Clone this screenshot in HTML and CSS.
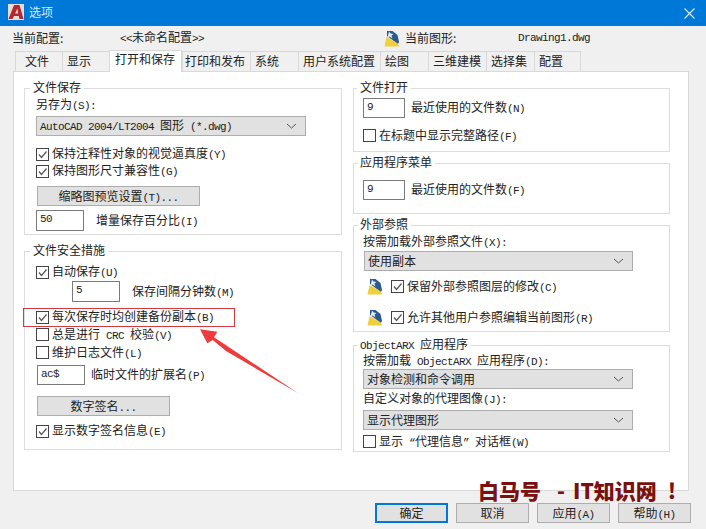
FILE: index.html
```html
<!DOCTYPE html>
<html lang="zh-CN">
<head>
    <meta charset="UTF-8">
    <title>选项</title>
    <link rel="stylesheet" href="styles.css">
</head>
<body>
    <div class="dialog">
        <!-- Title bar -->
        <div class="titlebar">
            <svg class="app-logo" width="16" height="16" viewBox="0 0 16 16">
                <rect width="16" height="16" fill="#e9dcd8"/>
                <polygon points="0.5,15 6,1 11.5,1 15.5,15 11.5,15 10.8,12 6,12 4.5,15" fill="#b3282d"/>
                <polygon points="7.2,9.4 10.2,9.4 9.3,4.5" fill="#e9dcd8"/>
            </svg>
            <span class="title-text">选项</span>
            <svg class="close" width="11" height="11" viewBox="0 0 11 11">
                <path d="M0.5 0.5L10.5 10.5M10.5 0.5L0.5 10.5" stroke="#dcecf9" stroke-width="1.1" fill="none"/>
            </svg>
        </div>

        <!-- Profile and drawing -->
        <div class="profile">
            <span class="profile-label">当前配置:</span>
            <span class="profile-name"><span class="en">&lt;&lt;</span>未命名配置<span class="en">&gt;&gt;</span></span>
            <svg class="dwg-icon dwg-top" width="16" height="17" viewBox="0 0 16 17">
                <polygon points="3,6 14,14 15,12 13.5,5 8.5,1 3,1" fill="#2a5a8c"/>
                <polygon points="2.5,7 13,13 15.5,16.5 0.5,16.5" fill="#f0cf3a"/>
                <polygon points="5,1.5 6.5,3.5 9.5,4 7.5,5.5 8.5,8.5 5.5,6.5 3.5,7.5" fill="#e4ecf4"/>
            </svg>
            <span class="drawing-label">当前图形:</span>
            <span class="en drawing-name">Drawing1.dwg</span>
        </div>

        <!-- Tabs -->
        <div class="tabs">
            <div class="tab tab-file">文件</div>
            <div class="tab tab-w47">显示</div>
            <div class="tab active">打开和保存</div>
            <div class="tab tab-print">打印和发布</div>
            <div class="tab tab-w48">系统</div>
            <div class="tab tab-user">用户系统配置</div>
            <div class="tab tab-w48">绘图</div>
            <div class="tab tab-3d">三维建模</div>
            <div class="tab tab-w48">选择集</div>
            <div class="tab tab-w47">配置</div>
        </div>

        <div class="panel">
            <div class="col">
                <fieldset class="group group-left">
                    <legend>文件保存</legend>
                    <div class="row mt1">另存为<span class="en">(S):</span></div>
                    <div class="combo combo-wide mt3">
                        <span><span class="en">AutoCAD 2004/LT2004 </span>图形<span class="en"> (*.dwg)</span></span>
                        <svg class="chev" width="11" height="6" viewBox="0 0 11 6"><path d="M1 1L5.5 5L10 1" stroke="#555" fill="none"/></svg>
                    </div>
                    <div class="row mt10"><span class="cb on"><svg width="11" height="11" viewBox="0 0 11 11"><path d="M2 5.5L4.5 8.5L9.5 2.5" stroke="#555" stroke-width="1.2" fill="none"/></svg></span>保持注释性对象的视觉逼真度<span class="en">(Y)</span></div>
                    <div class="row mt1"><span class="cb on"><svg width="11" height="11" viewBox="0 0 11 11"><path d="M2 5.5L4.5 8.5L9.5 2.5" stroke="#555" stroke-width="1.2" fill="none"/></svg></span>保持图形尺寸兼容性<span class="en">(G)</span></div>
                    <div class="btn btn-thumb mt7">缩略图预览设置<span class="en">(T)...</span></div>
                    <div class="row-input mt4">
                        <span class="field field-48 en">50</span>
                        <span class="after-12">增量保存百分比<span class="en">(I)</span></span>
                    </div>
                </fieldset>

                <fieldset class="group group-left group-safety">
                    <legend>文件安全措施</legend>
                    <div class="row mt5"><span class="cb on"><svg width="11" height="11" viewBox="0 0 11 11"><path d="M2 5.5L4.5 8.5L9.5 2.5" stroke="#555" stroke-width="1.2" fill="none"/></svg></span>自动保存<span class="en">(U)</span></div>
                    <div class="row-input mt1 indent">
                        <span class="field field-48 en">5</span>
                        <span class="after-12">保存间隔分钟数<span class="en">(M)</span></span>
                    </div>
                    <div class="row mt7"><span class="cb on"><svg width="11" height="11" viewBox="0 0 11 11"><path d="M2 5.5L4.5 8.5L9.5 2.5" stroke="#555" stroke-width="1.2" fill="none"/></svg></span>每次保存时均创建备份副本<span class="en">(B)</span></div>
                    <div class="row mt2"><span class="cb"></span>总是进行<span class="en"> CRC </span>校验<span class="en">(V)</span></div>
                    <div class="row mt2"><span class="cb"></span>维护日志文件<span class="en">(L)</span></div>
                    <div class="row-input mt4 nudge">
                        <span class="field field-48 field-short en">ac$</span>
                        <span class="after-6">临时文件的扩展名<span class="en">(P)</span></span>
                    </div>
                    <div class="btn btn-sign mt11">数字签名<span class="en">...</span></div>
                    <div class="row mt7"><span class="cb on"><svg width="11" height="11" viewBox="0 0 11 11"><path d="M2 5.5L4.5 8.5L9.5 2.5" stroke="#555" stroke-width="1.2" fill="none"/></svg></span>显示数字签名信息<span class="en">(E)</span></div>
                </fieldset>
            </div>

            <div class="col">
                <fieldset class="group group-right group-open">
                    <legend>文件打开</legend>
                    <div class="row-input mt2">
                        <span class="field field-42 field-short en">9</span>
                        <span class="after-6">最近使用的文件数<span class="en">(N)</span></span>
                    </div>
                    <div class="row mt10"><span class="cb"></span>在标题中显示完整路径<span class="en">(F)</span></div>
                </fieldset>

                <fieldset class="group group-right group-menu">
                    <legend>应用程序菜单</legend>
                    <div class="row-input mt9">
                        <span class="field field-42 field-short en">9</span>
                        <span class="after-6">最近使用的文件数<span class="en">(F)</span></span>
                    </div>
                </fieldset>

                <fieldset class="group group-right group-xref">
                    <legend>外部参照</legend>
                    <div class="row mt1">按需加载外部参照文件<span class="en">(X):</span></div>
                    <div class="combo combo-right nudge mt1">
                        <span>使用副本</span>
                        <svg class="chev" width="11" height="6" viewBox="0 0 11 6"><path d="M1 1L5.5 5L10 1" stroke="#555" fill="none"/></svg>
                    </div>
                    <div class="row-icon mt7">
                        <svg class="dwg-icon" width="16" height="17" viewBox="0 0 16 17">
                            <polygon points="3,6 14,14 15,12 13.5,5 8.5,1 3,1" fill="#2a5a8c"/>
                            <polygon points="2.5,7 13,13 15.5,16.5 0.5,16.5" fill="#f0cf3a"/>
                            <polygon points="5,1.5 6.5,3.5 9.5,4 7.5,5.5 8.5,8.5 5.5,6.5 3.5,7.5" fill="#e4ecf4"/>
                        </svg>
                        <span class="cb on"><svg width="11" height="11" viewBox="0 0 11 11"><path d="M2 5.5L4.5 8.5L9.5 2.5" stroke="#555" stroke-width="1.2" fill="none"/></svg></span>
                        <span>保留外部参照图层的修改<span class="en">(C)</span></span>
                    </div>
                    <div class="row-icon mt14">
                        <svg class="dwg-icon" width="16" height="17" viewBox="0 0 16 17">
                            <polygon points="3,6 14,14 15,12 13.5,5 8.5,1 3,1" fill="#2a5a8c"/>
                            <polygon points="2.5,7 13,13 15.5,16.5 0.5,16.5" fill="#f0cf3a"/>
                            <polygon points="5,1.5 6.5,3.5 9.5,4 7.5,5.5 8.5,8.5 5.5,6.5 3.5,7.5" fill="#e4ecf4"/>
                        </svg>
                        <span class="cb on"><svg width="11" height="11" viewBox="0 0 11 11"><path d="M2 5.5L4.5 8.5L9.5 2.5" stroke="#555" stroke-width="1.2" fill="none"/></svg></span>
                        <span>允许其他用户参照编辑当前图形<span class="en">(R)</span></span>
                    </div>
                </fieldset>

                <fieldset class="group group-right group-arx">
                    <legend><span class="en">ObjectARX </span>应用程序</legend>
                    <div class="row">按需加载<span class="en"> ObjectARX </span>应用程序<span class="en">(D):</span></div>
                    <div class="combo combo-arx">
                        <span>对象检测和命令调用</span>
                        <svg class="chev" width="11" height="6" viewBox="0 0 11 6"><path d="M1 1L5.5 5L10 1" stroke="#555" fill="none"/></svg>
                    </div>
                    <div class="row mt2">自定义对象的代理图像<span class="en">(J):</span></div>
                    <div class="combo combo-arx mt3">
                        <span>显示代理图形</span>
                        <svg class="chev" width="11" height="6" viewBox="0 0 11 6"><path d="M1 1L5.5 5L10 1" stroke="#555" fill="none"/></svg>
                    </div>
                    <div class="row mt4"><span class="cb"></span>显示<span class="en"> “</span>代理信息<span class="en">” </span>对话框<span class="en">(W)</span></div>
                </fieldset>
            </div>
        </div>

        <!-- Buttons -->
        <div class="footer">
            <div class="btn btn-foot btn-default">确定</div>
            <div class="btn btn-foot">取消</div>
            <div class="btn btn-foot">应用<span class="en">(A)</span></div>
            <div class="btn btn-foot">帮助<span class="en">(H)</span></div>
        </div>

        <!-- Annotations on top of the screenshot -->
        <div class="red-box"></div>
        <svg class="red-arrow" width="110" height="72" viewBox="0 0 110 72">
            <polygon points="0,1.3 17.3,3.7 14,9.3 98.3,65.3 26,23 12.7,12 7.3,15.3" fill="#ee3b3b"/>
        </svg>
        <div class="watermark">
            <span>白马号</span>
            <span class="wm-dash">-</span>
            <span class="wm-site">IT知识网</span>
            <span class="wm-bang">!</span>
        </div>
    </div>
</body>
</html>
```

FILE: styles.css
```css
* {
    box-sizing: border-box;
}

html, body {
    margin: 0;
    padding: 0;
}

body {
    width: 706px;
    height: 529px;
    overflow: hidden;
    background-color: #f0f0f0;
    color: #222;
    font-family: "Noto Sans CJK SC", "Liberation Sans", sans-serif;
    font-size: 12px;
    line-height: 16px;
}

.en {
    font-family: "Liberation Mono", monospace;
    font-size: 11px;
    letter-spacing: -0.6px;
}

.dialog {
    position: relative;
    width: 706px;
    height: 529px;
}

/* Title bar */
.titlebar {
    display: flex;
    align-items: center;
    height: 26px;
    padding: 0 11px 2px 8px;
    background-color: #0078d7;
}

.title-text {
    margin-left: 5px;
    color: #d5e8f8;
    font-size: 12px;
}

.close {
    margin-left: auto;
    margin-top: 2px;
}

/* Profile row */
.profile {
    display: flex;
    align-items: center;
    height: 24px;
    padding: 0 0 1px 12px;
}

.profile-label {
    width: 108px;
}

.profile-name {
    width: 264px;
}

.dwg-icon {
    flex: none;
}

.dwg-top {
    margin-top: 1px;
}

.drawing-label {
    width: 113px;
    margin-left: 5px;
}

/* Tabs */
.tabs {
    display: flex;
    align-items: flex-end;
    height: 22px;
    margin-bottom: -1px;
    padding-left: 15px;
    position: relative;
    z-index: 1;
}

.tab {
    height: 20px;
    padding: 1px 0 0 4px;
    margin-bottom: 1px;
    border: 1px solid #d9d9d9;
    border-bottom: none;
    border-right: none;
    background-color: #f0f0f0;
    white-space: nowrap;
    overflow: hidden;
}

.tab:last-child {
    border-right: 1px solid #d9d9d9;
}

.tab-file {
    width: 47px;
    padding-left: 9px;
}

.tab-w47 {
    width: 47px;
}

.tab-w48 {
    width: 48px;
}

.tab-print {
    width: 68px;
    padding-left: 2px;
}

.tab-user {
    width: 82px;
}

.tab-3d {
    width: 58px;
}

.tab.active {
    width: 73px;
    height: 22px;
    margin-bottom: 0;
    padding: 0 0 0 5px;
    background-color: #fff;
    border-right: 1px solid #d9d9d9;
}

/* Main panel */
.panel {
    display: grid;
    grid-template-columns: 318px 317px;
    column-gap: 11px;
    align-content: start;
    width: 676px;
    height: 420px;
    margin-left: 13px;
    padding: 8px 0 0 10px;
    background-color: #fff;
    border: 1px solid #d9d9d9;
}

.col {
    display: flex;
    flex-direction: column;
}

.group {
    margin: 0;
    min-width: 0;
    padding: 0;
    border: 1px solid #dcdcdc;
}

.group legend {
    height: 16px;
    padding: 0 3px;
    line-height: 14px;
    white-space: pre;
}

.group-left {
    padding: 0 0 3px 11px;
}

.group-left legend {
    margin-left: -6px;
}

.group-safety {
    margin-top: 8px;
    padding-bottom: 10px;
}

.group-right {
    margin-top: 3px;
    padding: 0 0 7px 9px;
}

.group-right legend {
    margin-left: -6px;
}

.group-open {
    margin-top: 0;
}

.group-menu {
    padding-bottom: 13px;
}

.group-xref {
    padding-bottom: 5px;
}

.group-arx {
    margin-top: 5px;
    padding-bottom: 1px;
}

/* Rows */
.row {
    height: 16px;
    line-height: 14px;
    white-space: pre;
}

.row .cb {
    display: inline-flex;
    vertical-align: -2px;
}

.row-icon {
    display: flex;
    align-items: center;
    height: 17px;
    padding-left: 4px;
    white-space: pre;
}

.row-icon .cb {
    margin-left: 8px;
}

.row-input {
    display: flex;
    align-items: center;
    white-space: pre;
}

.indent {
    margin-left: 36px;
}

.nudge {
    margin-left: 1px;
}

.after-12 {
    margin-left: 12px;
}

.after-6 {
    margin-left: 6px;
}

/* Controls */
.cb {
    display: inline-flex;
    align-items: center;
    justify-content: center;
    flex: none;
    width: 13px;
    height: 13px;
    margin-right: 3px;
    border: 1px solid #444;
    background-color: #fff;
}

.field {
    display: block;
    height: 21px;
    padding: 0 0 0 3px;
    border: 1px solid #7a7a7a;
    background-color: #fff;
    line-height: 16px;
    letter-spacing: -0.6px;
}

.field-48 {
    width: 48px;
}

.field-42 {
    width: 42px;
}

.field-short {
    height: 20px;
}

.combo {
    display: flex;
    align-items: center;
    height: 20px;
    padding-left: 3px;
    padding-right: 8px;
    background-color: #e1e1e1;
    border: 1px solid #adadad;
    white-space: pre;
}

.combo .chev {
    margin-left: auto;
}

.combo-wide {
    width: 270px;
}

.combo-right {
    width: 269px;
}

.combo-arx {
    width: 270px;
}

.btn {
    height: 20px;
    background-color: #e1e1e1;
    border: 1px solid #adadad;
    line-height: 17px;
    text-align: center;
    white-space: pre;
}

.btn-thumb {
    width: 163px;
    margin-left: 1px;
}

.btn-sign {
    width: 133px;
    margin-left: 1px;
}

/* Footer */
.footer {
    display: flex;
    justify-content: flex-end;
    gap: 8px;
    padding: 12px 15px 0 0;
}

.btn-foot {
    width: 73px;
}

.btn-default {
    border: 2px solid #0078d7;
    line-height: 15px;
}

/* Spacing */
.mt1 { margin-top: 1px; }
.mt2 { margin-top: 2px; }
.mt3 { margin-top: 3px; }
.mt4 { margin-top: 4px; }
.mt5 { margin-top: 5px; }
.mt7 { margin-top: 7px; }
.mt9 { margin-top: 9px; }
.mt10 { margin-top: 10px; }
.mt11 { margin-top: 11px; }
.mt14 { margin-top: 14px; }

/* Annotations */
.red-box {
    position: absolute;
    left: 23px;
    top: 308px;
    width: 212px;
    height: 19px;
    border: 1px solid #d23a3f;
}

.red-arrow {
    position: absolute;
    left: 200px;
    top: 328px;
}

.watermark {
    position: absolute;
    left: 478px;
    top: 479px;
    display: flex;
    height: 22px;
    color: #7a1010;
    font-size: 21px;
    font-weight: 900;
    line-height: 22px;
    white-space: pre;
}

.wm-dash {
    margin-left: 16px;
}

.wm-site {
    margin-left: 8px;
}

.wm-bang {
    margin-left: 11px;
}
```
